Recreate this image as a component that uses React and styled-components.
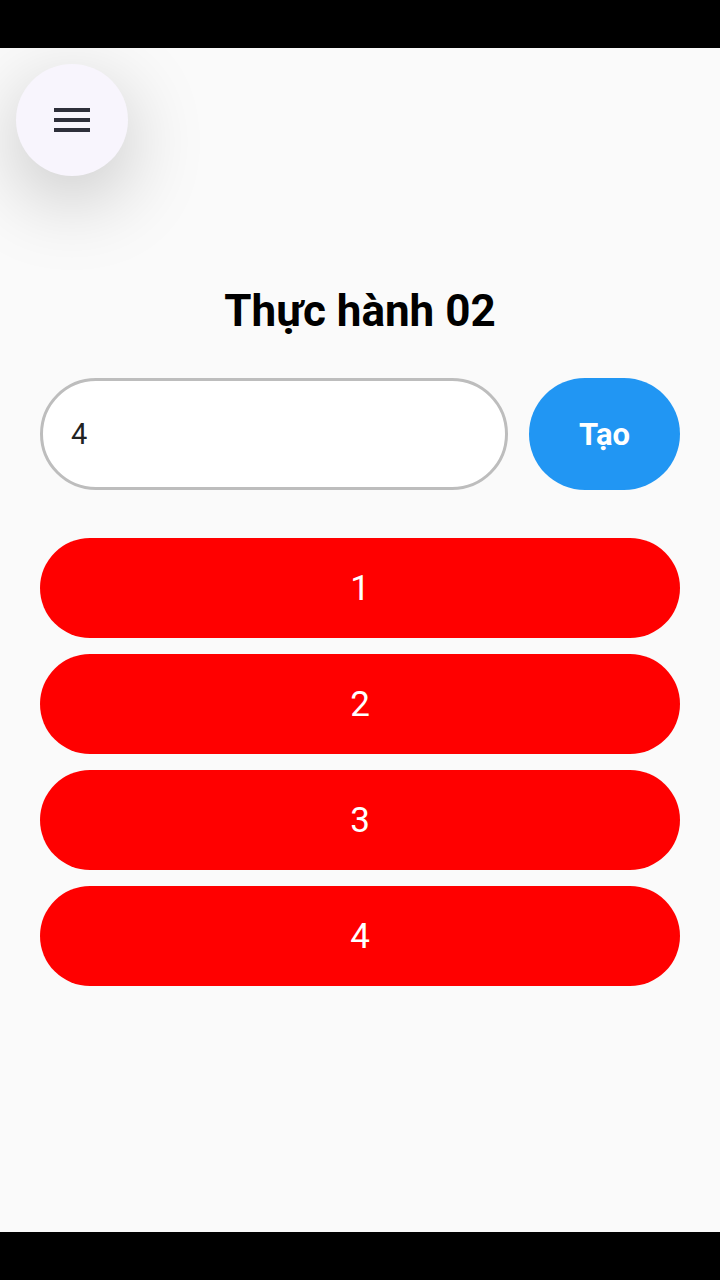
import React from "react";
import styled, { createGlobalStyle } from "styled-components";

const Global = createGlobalStyle`
  html, body { margin: 0; padding: 0; }
  body { background: #000; font-family: Roboto, "Noto Sans", sans-serif; }
  * { box-sizing: border-box; }
`;

const Frame = styled.div`
  width: 720px;
  height: 1280px;
  display: flex;
  flex-direction: column;
  background: #000;
`;

const SystemBar = styled.div`
  height: 48px;
  flex: none;
  background: #000;
`;

const Screen = styled.main`
  flex: 1;
  background: #fafafa;
  display: flex;
  flex-direction: column;
  padding: 16px 40px 0 16px;
  overflow: hidden;
`;

const MenuButton = styled.button`
  width: 112px;
  height: 112px;
  border-radius: 50%;
  border: none;
  background: #f8f5fd;
  box-shadow: 0 22px 80px rgba(0, 0, 0, 0.22);
  display: flex;
  align-items: center;
  justify-content: center;
  padding: 0;
  flex: none;
`;

const Content = styled.section`
  display: flex;
  flex-direction: column;
  padding-left: 24px;
  margin-top: 109px;
`;

const Title = styled.h1`
  margin: 0;
  font-size: 44px;
  line-height: 52px;
  font-weight: 700;
  color: #000;
  text-align: center;
`;

const InputRow = styled.div`
  display: flex;
  gap: 21px;
  margin-top: 41px;
`;

const NumberInput = styled.input`
  flex: 1;
  min-width: 0;
  height: 112px;
  border: 3px solid #bdbdbd;
  border-radius: 56px;
  background: #fff;
  padding: 0 28px;
  font-family: Roboto, sans-serif;
  font-size: 29px;
  color: #222;
  outline: none;
`;

const CreateButton = styled.button`
  width: 151px;
  height: 112px;
  flex: none;
  border: none;
  border-radius: 56px;
  background: #2196f3;
  color: #fff;
  font-family: Roboto, sans-serif;
  font-weight: 700;
  font-size: 31px;
  padding: 0;
`;

const List = styled.div`
  display: flex;
  flex-direction: column;
  gap: 16px;
  margin-top: 48px;
`;

const Item = styled.div`
  height: 100px;
  border-radius: 50px;
  background: #ff0000;
  color: #fff;
  font-size: 35px;
  display: flex;
  align-items: center;
  justify-content: center;
`;

const MenuIcon = () => (
  <svg width="36" height="24" viewBox="0 0 36 24">
    <rect x="0" y="0" width="36" height="4" fill="#2e2f3a" />
    <rect x="0" y="10" width="36" height="4" fill="#2e2f3a" />
    <rect x="0" y="20" width="36" height="4" fill="#2e2f3a" />
  </svg>
);

export default function App() {
  const items = [1, 2, 3, 4];
  return (
    <Frame>
      <Global />
      <SystemBar />
      <Screen>
        <MenuButton aria-label="menu">
          <MenuIcon />
        </MenuButton>
        <Content>
          <Title>Thực hành 02</Title>
          <InputRow>
            <NumberInput defaultValue="4" />
            <CreateButton>Tạo</CreateButton>
          </InputRow>
          <List>
            {items.map((n) => (
              <Item key={n}>{n}</Item>
            ))}
          </List>
        </Content>
      </Screen>
      <SystemBar />
    </Frame>
  );
}
